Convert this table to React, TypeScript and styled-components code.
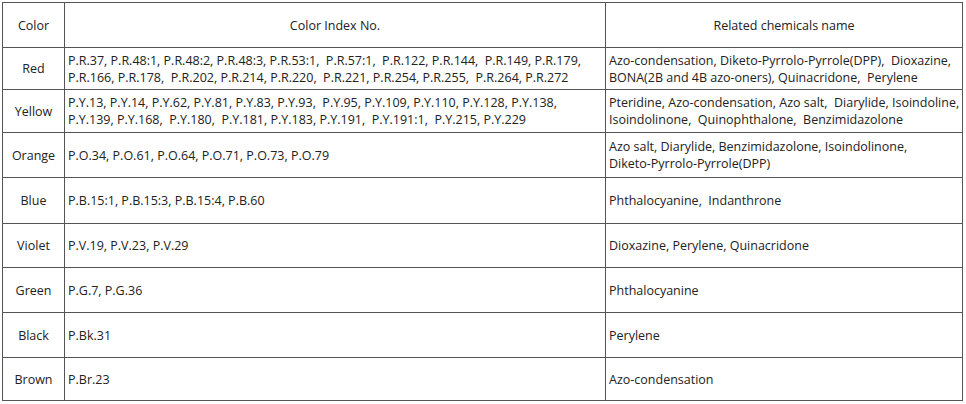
import { createGlobalStyle, styled } from 'styled-components';

const GlobalStyle = createGlobalStyle`
  body {
    margin: 0;
    background: #fff;
  }
`;

type Row = {
  color: string;
  index: string[];
  chemicals: string[];
  height: number;
};

const rows: Row[] = [
  {
    color: 'Red',
    index: [
      'P.R.37, P.R.48:1, P.R.48:2, P.R.48:3, P.R.53:1,  P.R.57:1,  P.R.122, P.R.144,  P.R.149, P.R.179,',
      'P.R.166, P.R.178,  P.R.202, P.R.214, P.R.220,  P.R.221, P.R.254, P.R.255,  P.R.264, P.R.272',
    ],
    chemicals: [
      'Azo-condensation, Diketo-Pyrrolo-Pyrrole(DPP),  Dioxazine,',
      'BONA(2B and 4B azo-oners), Quinacridone,  Perylene',
    ],
    height: 41,
  },
  {
    color: 'Yellow',
    index: [
      'P.Y.13, P.Y.14, P.Y.62, P.Y.81, P.Y.83, P.Y.93,  P.Y.95, P.Y.109, P.Y.110, P.Y.128, P.Y.138,',
      'P.Y.139, P.Y.168,  P.Y.180,  P.Y.181, P.Y.183, P.Y.191,  P.Y.191:1,  P.Y.215, P.Y.229',
    ],
    chemicals: [
      'Pteridine, Azo-condensation, Azo salt,  Diarylide, Isoindoline,',
      'Isoindolinone,  Quinophthalone,  Benzimidazolone',
    ],
    height: 42,
  },
  {
    color: 'Orange',
    index: ['P.O.34, P.O.61, P.O.64, P.O.71, P.O.73, P.O.79'],
    chemicals: [
      'Azo salt, Diarylide, Benzimidazolone, Isoindolinone,',
      'Diketo-Pyrrolo-Pyrrole(DPP)',
    ],
    height: 44,
  },
  {
    color: 'Blue',
    index: ['P.B.15:1, P.B.15:3, P.B.15:4, P.B.60'],
    chemicals: ['Phthalocyanine,  Indanthrone'],
    height: 45,
  },
  {
    color: 'Violet',
    index: ['P.V.19, P.V.23, P.V.29'],
    chemicals: ['Dioxazine, Perylene, Quinacridone'],
    height: 43,
  },
  {
    color: 'Green',
    index: ['P.G.7, P.G.36'],
    chemicals: ['Phthalocyanine'],
    height: 44,
  },
  {
    color: 'Black',
    index: ['P.Bk.31'],
    chemicals: ['Perylene'],
    height: 44,
  },
  {
    color: 'Brown',
    index: ['P.Br.23'],
    chemicals: ['Azo-condensation'],
    height: 42,
  },
];

export default function App() {
  return (
    <Page>
      <GlobalStyle />
      <Table>
        <colgroup>
          <col width={62} />
          <col width={541} />
          <col width={357} />
        </colgroup>
        <tbody>
          <tr>
            <HeadCell $height={44}>Color</HeadCell>
            <HeadCell $height={44}>Color Index No.</HeadCell>
            <HeadCell $height={44}>Related chemicals name</HeadCell>
          </tr>
          {rows.map((row) => (
            <tr key={row.color}>
              <HeadCell $height={row.height}>{row.color}</HeadCell>
              <Cell $height={row.height}>
                {row.index.map((line) => (
                  <Line key={line}>{line}</Line>
                ))}
              </Cell>
              <Cell $height={row.height}>
                {row.chemicals.map((line) => (
                  <Line key={line}>{line}</Line>
                ))}
              </Cell>
            </tr>
          ))}
        </tbody>
      </Table>
    </Page>
  );
}

const Page = styled.div`
  padding: 2px;
`;

const Table = styled.table`
  width: 961px;
  table-layout: fixed;
  border-collapse: collapse;
  font-family: 'Open Sans', 'Noto Sans', sans-serif;
  font-size: 12.5px;
  color: #222;
`;

const Cell = styled.td<{ $height: number }>`
  height: ${(p) => p.$height}px;
  padding: 0 3px;
  border: 1px solid #555;
  vertical-align: middle;
  text-align: left;
  line-height: 17px;
`;

const HeadCell = styled(Cell)`
  text-align: center;
`;

const Line = styled.div`
  white-space: pre;
`;
